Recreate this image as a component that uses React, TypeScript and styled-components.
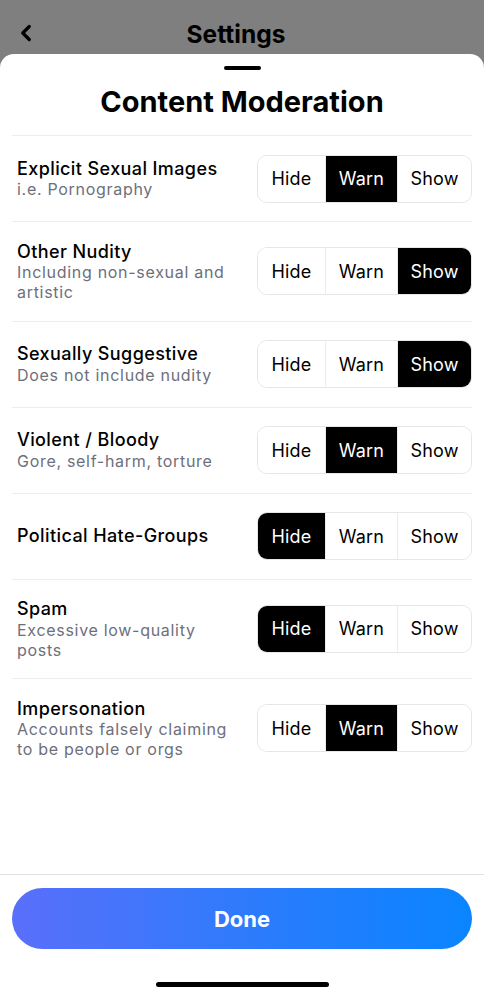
import React, { useState } from "react";
import styled, { createGlobalStyle } from "styled-components";
import { ChevronLeft } from "lucide-react";

const GlobalStyle = createGlobalStyle`
  html, body {
    margin: 0;
    padding: 0;
    background: #7f7f7f;
  }
  body {
    font-family: Inter, "Noto Sans", "Liberation Sans", sans-serif;
    color: #000;
  }
`;

const Screen = styled.div`
  width: 484px;
  height: 1000px;
  display: flex;
  flex-direction: column;
  overflow: hidden;
`;

const NavBar = styled.div`
  height: 54px;
  flex-shrink: 0;
  display: flex;
  align-items: center;
  justify-content: center;
  position: relative;
`;

const BackButton = styled.div`
  position: absolute;
  left: 13px;
  top: 20px;
  display: flex;
`;

const NavTitle = styled.div`
  font-size: 24.5px;
  font-weight: 700;
  margin-top: 13px;
  margin-right: 12px;
`;

const Sheet = styled.div`
  flex: 1;
  background: #fff;
  border-radius: 14px 14px 0 0;
  display: flex;
  flex-direction: column;
  align-items: stretch;
`;

const Handle = styled.div`
  width: 37px;
  height: 4px;
  border-radius: 2px;
  background: #000;
  margin: 12px auto 0;
`;

const Title = styled.h1`
  margin: 15px 0 0;
  font-size: 29px;
  line-height: 34px;
  font-weight: 700;
  text-align: center;
`;

const List = styled.div`
  flex: 1;
  margin: 16px 12px 0;
  border-top: 1px solid #ececec;
`;

const Row = styled.div<{ $last?: boolean }>`
  display: flex;
  align-items: center;
  justify-content: space-between;
  padding: 18.5px 0 18.5px 5px;
  border-bottom: ${({ $last }) => ($last ? "none" : "1px solid #ececec")};
`;

const Labels = styled.div`
  display: flex;
  flex-direction: column;
  width: 228px;
`;

const RowTitle = styled.div`
  font-size: 18px;
  line-height: 21.5px;
  font-weight: 500;
  letter-spacing: 0.4px;
`;

const RowDesc = styled.div`
  font-size: 16px;
  line-height: 20px;
  letter-spacing: 0.7px;
  color: #6d6f7b;
`;

const Segmented = styled.div`
  display: flex;
  height: 48px;
  border: 1px solid #e6e6e6;
  border-radius: 10px;
  overflow: hidden;
  box-sizing: border-box;
`;

const Segment = styled.div<{ $active: boolean; $w: number }>`
  width: ${({ $w }) => $w}px;
  display: flex;
  align-items: center;
  justify-content: center;
  font-size: 18px;
  letter-spacing: 0.2px;
  background: ${({ $active }) => ($active ? "#000" : "#fff")};
  color: ${({ $active }) => ($active ? "#fff" : "#000")};
  & + & {
    border-left: 1px solid #ececec;
  }
`;

const Footer = styled.div`
  border-top: 1px solid #e2e2e2;
  padding: 13px 12px 13px;
  display: flex;
  flex-direction: column;
  align-items: center;
`;

const DoneButton = styled.button`
  width: 100%;
  height: 61px;
  border: none;
  border-radius: 31px;
  background: linear-gradient(90deg, #5a6ffa 0%, #2a7cfc 55%, #0a85ff 100%);
  color: #fff;
  font-family: inherit;
  font-size: 22px;
  font-weight: 700;
  cursor: pointer;
`;

const HomeIndicator = styled.div`
  width: 173px;
  height: 5px;
  border-radius: 3px;
  background: #000;
  margin-top: 33px;
`;

type Level = "Hide" | "Warn" | "Show";

const OPTIONS: { label: Level; w: number }[] = [
  { label: "Hide", w: 67 },
  { label: "Warn", w: 71 },
  { label: "Show", w: 73 },
];

const initialItems: { title: string; desc?: string; value: Level }[] = [
  { title: "Explicit Sexual Images", desc: "i.e. Pornography", value: "Warn" },
  { title: "Other Nudity", desc: "Including non-sexual and artistic", value: "Show" },
  { title: "Sexually Suggestive", desc: "Does not include nudity", value: "Show" },
  { title: "Violent / Bloody", desc: "Gore, self-harm, torture", value: "Warn" },
  { title: "Political Hate-Groups", value: "Hide" },
  { title: "Spam", desc: "Excessive low-quality posts", value: "Hide" },
  { title: "Impersonation", desc: "Accounts falsely claiming to be people or orgs", value: "Warn" },
];

const App = () => {
  const [items, setItems] = useState(initialItems);

  const setValue = (index: number, value: Level) => {
    setItems((prev) => prev.map((it, i) => (i === index ? { ...it, value } : it)));
  };

  return (
    <>
      <GlobalStyle />
      <Screen>
        <NavBar>
          <BackButton>
            <ChevronLeft size={26} strokeWidth={3} />
          </BackButton>
          <NavTitle>Settings</NavTitle>
        </NavBar>
        <Sheet>
          <Handle />
          <Title>Content Moderation</Title>
          <List>
            {items.map((item, i) => (
              <Row key={item.title} $last={i === items.length - 1}>
                <Labels>
                  <RowTitle>{item.title}</RowTitle>
                  {item.desc && <RowDesc>{item.desc}</RowDesc>}
                </Labels>
                <Segmented>
                  {OPTIONS.map((opt) => (
                    <Segment
                      key={opt.label}
                      $w={opt.w}
                      $active={item.value === opt.label}
                      onClick={() => setValue(i, opt.label)}
                    >
                      {opt.label}
                    </Segment>
                  ))}
                </Segmented>
              </Row>
            ))}
          </List>
          <Footer>
            <DoneButton>Done</DoneButton>
            <HomeIndicator />
          </Footer>
        </Sheet>
      </Screen>
    </>
  );
};

export default App;
